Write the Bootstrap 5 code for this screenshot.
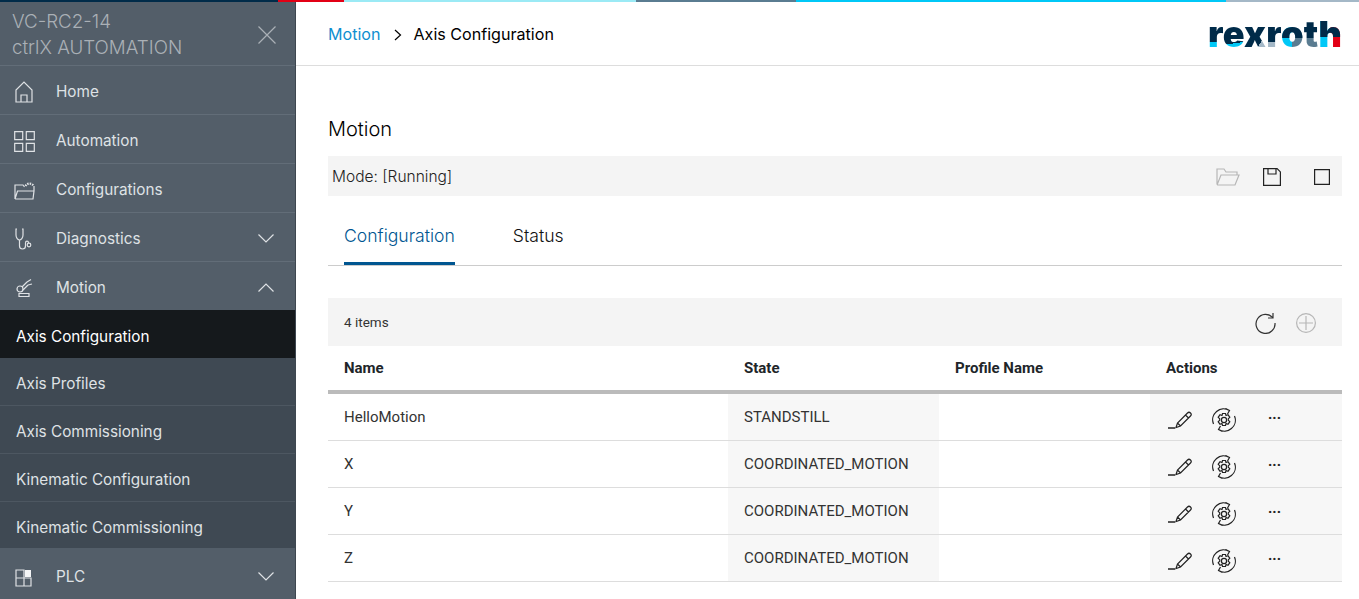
<!DOCTYPE html>
<html lang="en">
<head>
  <meta charset="UTF-8">
  <title>Axis Configuration - ctrlX AUTOMATION</title>
  <link href="https://cdn.jsdelivr.net/npm/bootstrap@5.3.0/dist/css/bootstrap.min.css" rel="stylesheet">
  <style>
    html, body { height: 100%; overflow: hidden; }
    body { font-family: "Inter", "Liberation Sans", sans-serif; color: #000; background: #fff; }
    svg { fill: none; stroke: currentColor; stroke-width: 1.2; flex: none; }

    /* Rainbow strip on top */
    .top-strip { height: 2px; }
    .top-strip div { height: 2px; }
    .s1 { width: 278px; background: #002b49; }
    .s2 { width: 66px; background: #e20015; }
    .s3 { width: 292px; background: #9beaf5; }
    .s4 { width: 160px; background: #5a7c91; }
    .s5 { width: 430px; background: #00c8f7; }
    .s6 { flex: 1; background: #a4b8c7; }

    /* Sidebar */
    .app-body { height: 597px; }
    .side-nav { width: 296px; background: #535e69; border-right: 1px solid #3e4750; flex: none; }
    .side-head { height: 64px; color: #aab0b6; font-size: 18.8px; font-weight: 300; line-height: 26px; padding: 7px 12px 0; border-bottom: 1px solid #626d78; }
    .side-head svg { color: #aab0b6; margin-top: 17px; margin-right: 7px; }
    .side-item { height: 49px; color: #dfe2e5; font-size: 15.3px; padding: 4px 16px 0 14px; border-bottom: 1px solid #626d78; background: #535e69; }
    .side-item.open-item { height: 48px; border-bottom: 0; }
    .side-item.last-item { padding-top: 6px; border-bottom: 0; }
    .side-item .ico { width: 42px; display: flex; }
    .side-item .chev { margin-left: auto; margin-right: 5px; margin-top: -2px; }
    .side-sub { height: 48px; color: #dfe2e5; font-size: 15.3px; padding: 6px 16px 0; background: #3f4953; border-bottom: 1px solid #4d5761; }
    .side-sub.active-sub { background: #15191c; color: #fff; border-bottom: 0; }
    .side-sub.last-sub { border-bottom: 2px solid #535e69; }

    /* Header */
    .main-head { height: 64px; border-bottom: 1px solid #ddd; padding: 1px 17px 0 32px; }
    .crumb-bar { font-size: 16.1px; margin: 0; --bs-breadcrumb-margin-bottom: 0; }
    .crumb-bar a { color: #0f8fd0; text-decoration: none; }
    .crumb-bar .breadcrumb-item + .breadcrumb-item { padding-left: 13px; }
    .crumb-bar .breadcrumb-item + .breadcrumb-item::before { content: none; }
    .crumb-bar svg { margin-right: 12px; vertical-align: -1px; }

    .rex-logo { font-weight: 900; font-size: 36px; line-height: 40px; letter-spacing: .2px; font-family: "Inter", sans-serif; }
    .rex-logo span { color: transparent; -webkit-background-clip: text; background-clip: text; }
    .l-r1 { background-image: linear-gradient(#002b49 69%, #00c8f7 69%); }
    .l-e { background-image: linear-gradient(172deg, #002b49 70%, #00c8f7 70%); }
    .l-x { background-image: linear-gradient(120deg, #002b49 72%, #a4b8c7 72%); }
    .l-r2 { background-image: linear-gradient(#002b49 69%, #a4b8c7 69%); }
    .l-o { background-image: linear-gradient(#002b49 60%, transparent 60%), linear-gradient(90deg, #00c8f7 50%, #5a7c91 50%); }
    .l-t { background-image: linear-gradient(#002b49 60%, #5a7c91 60%); }
    .l-h { background-image: linear-gradient(#002b49 57%, transparent 57%), linear-gradient(90deg, #00c8f7 50%, #e20015 50%); }

    /* Content */
    .content-wrap { padding: 0 17px 0 32px; }
    .page-title { font-size: 20px; font-weight: 300; line-height: 26px; margin: 50px 0 14px; }
    .mode-bar { height: 40px; background: #f4f4f4; font-size: 15.5px; font-weight: 300; color: #222; padding: 2px 12px 0 4px; }
    .mode-bar .acts svg + svg { margin-left: 23px; }
    .mode-bar .acts svg:last-child { margin-left: 33px; }
    .tab-row { height: 70px; border-bottom: 1px solid #ccc; padding-left: 16px; margin-bottom: 32px; gap: 58px; }
    .tab-row .nav-link { padding: 0; height: 69px; line-height: 80px; font-size: 17.6px; font-weight: 300; color: #111; border-radius: 0; }
    .tab-row .nav-link.active { color: #005691; border-bottom: 3px solid #005691; }
    .list-bar { height: 48px; background: #f4f4f4; font-family: "Roboto", sans-serif; font-size: 13.5px; color: #333; padding: 1px 26px 0 16px; gap: 20px; }

    /* Table */
    .axis-table { table-layout: fixed; width: 1014px; margin: 0; font-family: "Roboto", sans-serif; font-size: 15px; border-collapse: separate; border-spacing: 0; }
    .axis-table th { font-weight: 700; height: 48px; padding: 0 16px; border-bottom: 4px solid #bbb; vertical-align: middle; }
    .axis-table td { height: 47px; padding: 0 16px; border-bottom: 1px solid #ddd; vertical-align: middle; color: #333; }
    .axis-table .shade { background: #f7f7f7; }
    .row-acts { color: #222; padding: 6px 0 0 1px; gap: 19px; }
    .more-dots { font-weight: 700; font-size: 15px; line-height: 10px; margin: -12px 0 0 13px; }
  </style>
</head>
<body>
  <div class="top-strip d-flex">
    <div class="s1"></div><div class="s2"></div><div class="s3"></div><div class="s4"></div><div class="s5"></div><div class="s6"></div>
  </div>

  <div class="app-body d-flex">
    <nav class="side-nav">
      <div class="side-head d-flex justify-content-between">
        <div>VC-RC2-14<br>ctrlX AUTOMATION</div>
        <svg width="18" height="18" viewBox="0 0 18 18"><path d="M.5.500l17 17M17.500.500l-17 17"/></svg>
      </div>
      <div class="side-item d-flex align-items-center">
        <span class="ico"><svg width="20" height="22" viewBox="0 0 20 22"><path d="M2 21V9l8-8 8 8v12zM7 21v-7h6v7"/></svg></span>Home
      </div>
      <div class="side-item d-flex align-items-center">
        <span class="ico"><svg width="21" height="21" viewBox="0 0 21 21" stroke-width="1.5"><path d="M.7.7h8v8h-8zM12.3.7h8v8h-8zM.7 12.3h8v8h-8zM12.3 12.3h8v8h-8z"/></svg></span>Automation
      </div>
      <div class="side-item d-flex align-items-center">
        <span class="ico"><svg width="22" height="20" viewBox="0 0 22 20"><path d="M1 19V5h8l1.500 2M1 19h18l1-8H3.500L1 19M20 11V6"/><path d="M11.500 6a4.500 4.500 0 0 1 8 0" stroke-width="2.200" stroke-dasharray="1.500 1"/></svg></span>Configurations
      </div>
      <div class="side-item d-flex align-items-center">
        <span class="ico"><svg width="20" height="22" viewBox="0 0 20 22"><path d="M3 1H2v6c0 3 2 5 3.500 5S9 10 9 7V1H8M5.500 12v6c0 4 6 4 6 0v-3c0-2.500 3-2.500 3 0"/><circle cx="15" cy="17" r="1.800"/></svg></span>Diagnostics
        <svg class="chev" width="16" height="9" viewBox="0 0 16 9"><path d="M.5.500L8 8l7.500-7.500"/></svg>
      </div>
      <div class="side-item open-item d-flex align-items-center">
        <span class="ico"><svg width="20" height="20" viewBox="0 0 20 20" stroke-width="1.5"><path d="M5 15.500h10v3H5z"/><circle cx="6" cy="11" r="3"/><path d="M8 9l5-5M9 12l5-5M13 4l4-2.500M14 7l4-1"/></svg></span>Motion
        <svg class="chev" width="16" height="9" viewBox="0 0 16 9"><path d="M.5 8.500L8 1l7.500 7.500"/></svg>
      </div>
      <div class="side-sub active-sub d-flex align-items-center">Axis Configuration</div>
      <div class="side-sub d-flex align-items-center">Axis Profiles</div>
      <div class="side-sub d-flex align-items-center">Axis Commissioning</div>
      <div class="side-sub d-flex align-items-center">Kinematic Configuration</div>
      <div class="side-sub last-sub d-flex align-items-center">Kinematic Commissioning</div>
      <div class="side-item last-item d-flex align-items-center">
        <span class="ico"><svg width="18" height="18" viewBox="0 0 18 18"><path d="M2 1h8v16H2zM2 9h15v8H10"/><path d="M11 1h6v7h-6z" fill="#f4f5f6" stroke="none"/></svg></span>PLC
        <svg class="chev" width="16" height="9" viewBox="0 0 16 9"><path d="M.5.500L8 8l7.500-7.500"/></svg>
      </div>
    </nav>

    <main class="flex-grow-1">
      <header class="main-head d-flex align-items-center justify-content-between">
        <ol class="breadcrumb crumb-bar">
          <li class="breadcrumb-item"><a href="#">Motion</a></li>
          <li class="breadcrumb-item"><svg width="8" height="12" viewBox="0 0 8 12"><path d="M1 1l5.500 5L1 11"/></svg>Axis Configuration</li>
        </ol>
        <div class="rex-logo"><span class="l-r1">r</span><span class="l-e">e</span><span class="l-x">x</span><span class="l-r2">r</span><span class="l-o">o</span><span class="l-t">t</span><span class="l-h">h</span></div>
      </header>

      <div class="content-wrap">
        <h1 class="page-title">Motion</h1>
        <div class="mode-bar d-flex align-items-center justify-content-between">
          <span>Mode: [Running]</span>
          <div class="acts d-flex align-items-center">
            <svg width="24" height="18" viewBox="0 0 24 18" class="text-black-50 opacity-50"><path d="M1 16V1h7l2 3h11v3M1 17h18l4-10H5L1 17"/></svg>
            <svg width="18" height="18" viewBox="0 0 18 18"><path d="M.6.600h13.500l3.300 3.300v13.500H.6zM5 1v5h8V1"/></svg>
            <svg width="16" height="16" viewBox="0 0 16 16"><path d="M.6.600h14.800v14.800H.6z"/></svg>
          </div>
        </div>

        <ul class="nav tab-row">
          <li class="nav-item"><a class="nav-link active" href="#">Configuration</a></li>
          <li class="nav-item"><a class="nav-link" href="#">Status</a></li>
        </ul>

        <div class="list-bar d-flex align-items-center justify-content-between">
          <span>4 items</span>
          <div class="d-flex align-items-center gap-3">
            <svg width="22" height="22" viewBox="0 0 22 22" class="me-1"><path d="M19 6a9.500 9.500 0 1 0 2 5M19 1v5h-5"/></svg>
            <svg width="20" height="20" viewBox="0 0 20 20" class="text-black-50 opacity-50"><circle cx="10" cy="10" r="9.400"/><path d="M10 3v14M3 10h14"/></svg>
          </div>
        </div>

        <table class="table axis-table">
          <colgroup><col style="width:400px"><col style="width:211px"><col style="width:211px"><col style="width:192px"></colgroup>
          <thead>
            <tr><th>Name</th><th>State</th><th>Profile Name</th><th>Actions</th></tr>
          </thead>
          <tbody id="axisRows"></tbody>
        </table>
      </div>
    </main>
  </div>

  <script src="https://cdn.jsdelivr.net/npm/bootstrap@5.3.0/dist/js/bootstrap.bundle.min.js"></script>
  <script>
    const axes = [["HelloMotion", "STANDSTILL"], ["X", "COORDINATED_MOTION"], ["Y", "COORDINATED_MOTION"], ["Z", "COORDINATED_MOTION"]];
    const pencil = '<svg width="26" height="18" viewBox="0 0 26 18"><path d="M1 17h7" stroke-width="1.500"/><path d="M9 16.500l1.500-4.500L20.500 2a2 2 0 0 1 3 3L13.500 15zM10.500 12l3 3M18.500 4l3 3"/></svg>';
    const gearSync = '<svg width="24" height="24" viewBox="0 0 24 24"><path d="M1.500 16A11 11 0 0 1 17.500 2.500M13.500.5l4 2-2 3.500M22.500 8A11 11 0 0 1 6.500 21.500M10.500 23.500l-4-2 2-3.500"/><circle cx="12" cy="12" r="2.600"/><path d="M10.500 5.500h3l.5 2 2-.8 1.800 2.600-1.500 1.500v1.400l1.500 1.500-1.800 2.600-2-.8-.5 2h-3l-.5-2-2 .8-1.800-2.600 1.500-1.500v-1.400L6.200 9.300 8 6.700l2 .8z"/></svg>';
    document.getElementById("axisRows").innerHTML = axes.map(([name, state]) =>
      `<tr><td>${name}</td><td class="shade">${state}</td><td></td><td class="shade"><div class="row-acts d-flex align-items-center">${pencil}${gearSync}<span class="more-dots">...</span></div></td></tr>`
    ).join("");
  </script>
</body>
</html>
